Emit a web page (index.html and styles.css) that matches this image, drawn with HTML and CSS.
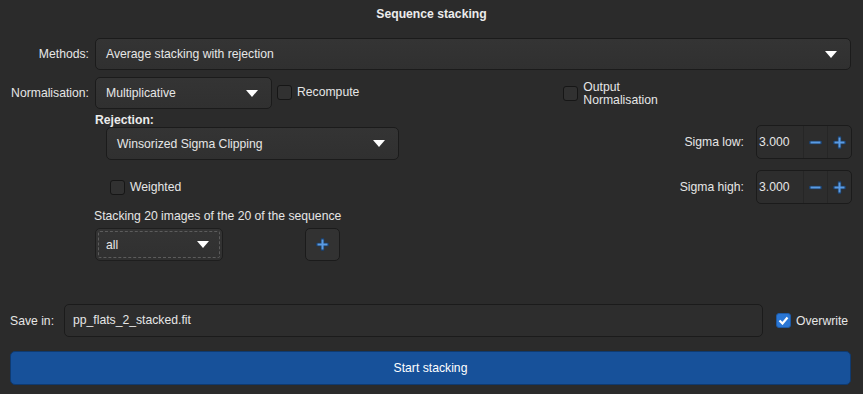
FILE: index.html
```html
<!DOCTYPE html>
<html lang="en">
  <head>
    <meta charset="UTF-8">
    <link rel="stylesheet" href="styles.css">
    <title>Sequence stacking</title>
  </head>
  <body>
    <div class="title">Sequence stacking</div>

    <div class="row methods-row">
      <label class="row-label">Methods:</label>
      <div class="combo grow">
        <span>Average stacking with rejection</span>
        <span class="arrow"></span>
      </div>
    </div>

    <div class="row norm-row">
      <label class="row-label">Normalisation:</label>
      <div class="combo norm-combo">
        <span>Multiplicative</span>
        <span class="arrow"></span>
      </div>
      <div class="check recompute"><span class="box"></span>Recompute</div>
      <div class="check output-norm"><span class="box"></span><span>Output<br>Normalisation</span></div>
    </div>

    <div class="rejection">
      <div class="rej-left">
        <div class="rej-title">Rejection:</div>
        <div class="combo rej-combo">
          <span>Winsorized Sigma Clipping</span>
          <span class="arrow"></span>
        </div>
        <div class="check weighted"><span class="box"></span>Weighted</div>
        <div class="stack-info">Stacking 20 images of the 20 of the sequence</div>
        <div class="filter-row">
          <div class="combo all-combo">
            <span>all</span>
            <span class="arrow"></span>
          </div>
          <div class="add-btn">
            <svg width="13" height="13" viewBox="0 0 13 13"><path d="M6.5 1.5v10M1.5 6.5h10" stroke="#1d3e66" stroke-width="3.6" stroke-linecap="round"/><path d="M6.5 1.5v10M1.5 6.5h10" stroke="#5a9be3" stroke-width="2"/></svg>
          </div>
        </div>
      </div>
      <div class="rej-right">
        <div class="sigma-row">
          <span class="sigma-label">Sigma low:</span>
          <div class="spin">
            <span class="spin-value">3.000</span>
            <span class="spin-btn">
              <svg width="13" height="13" viewBox="0 0 13 13"><path d="M1.5 6.5h10" stroke="#1d3e66" stroke-width="3.6" stroke-linecap="round"/><path d="M1.5 6.5h10" stroke="#5a9be3" stroke-width="2"/></svg>
            </span>
            <span class="spin-btn">
              <svg width="13" height="13" viewBox="0 0 13 13"><path d="M6.5 1.5v10M1.5 6.5h10" stroke="#1d3e66" stroke-width="3.6" stroke-linecap="round"/><path d="M6.5 1.5v10M1.5 6.5h10" stroke="#5a9be3" stroke-width="2"/></svg>
            </span>
          </div>
        </div>
        <div class="sigma-row">
          <span class="sigma-label">Sigma high:</span>
          <div class="spin">
            <span class="spin-value">3.000</span>
            <span class="spin-btn">
              <svg width="13" height="13" viewBox="0 0 13 13"><path d="M1.5 6.5h10" stroke="#1d3e66" stroke-width="3.6" stroke-linecap="round"/><path d="M1.5 6.5h10" stroke="#5a9be3" stroke-width="2"/></svg>
            </span>
            <span class="spin-btn">
              <svg width="13" height="13" viewBox="0 0 13 13"><path d="M6.5 1.5v10M1.5 6.5h10" stroke="#1d3e66" stroke-width="3.6" stroke-linecap="round"/><path d="M6.5 1.5v10M1.5 6.5h10" stroke="#5a9be3" stroke-width="2"/></svg>
            </span>
          </div>
        </div>
      </div>
    </div>

    <div class="row save-row">
      <label class="save-label">Save in:</label>
      <div class="entry">pp_flats_2_stacked.fit</div>
      <div class="check overwrite">
        <span class="box checked">
          <svg width="11" height="9" viewBox="0 0 11 9"><path d="M1.5 4.5l3 3 5-6" fill="none" stroke="#fff" stroke-width="2.2"/></svg>
        </span>Overwrite
      </div>
    </div>

    <div class="start-btn">Start stacking</div>
  </body>
</html>
```

FILE: styles.css
```css
body {
  margin: 0;
  width: 863px;
  height: 394px;
  background-color: #2b2b2b;
  color: #e6e6e6;
  font-family: "Liberation Sans", Arial, sans-serif;
  font-size: 12.2px;
  overflow: hidden;
}

.title {
  height: 28px;
  line-height: 28px;
  text-align: center;
  font-weight: bold;
  color: #ececec;
}

.row {
  display: flex;
  align-items: center;
  padding-right: 12px;
}

.methods-row {
  margin-top: 10px;
  height: 32px;
}

.norm-row {
  margin-top: 7px;
  height: 32px;
}

.row-label {
  width: 89px;
  text-align: right;
  margin-right: 6px;
}

.combo {
  box-sizing: border-box;
  height: 32px;
  display: flex;
  align-items: center;
  justify-content: space-between;
  padding: 0 13px 0 10px;
  background: linear-gradient(#343434, #303030);
  border: 1px solid #1b1b1b;
  border-radius: 5px;
}

.grow {
  flex: 1;
}

.arrow {
  width: 0;
  height: 0;
  border-left: 6px solid transparent;
  border-right: 6px solid transparent;
  border-top: 7px solid #ffffff;
}

.norm-combo {
  width: 177px;
}

.check {
  display: flex;
  align-items: center;
}

.box {
  box-sizing: border-box;
  width: 15px;
  height: 15px;
  margin-right: 5px;
  background: #313131;
  border: 1px solid #161616;
  border-radius: 3px;
  display: flex;
  align-items: center;
  justify-content: center;
}

.box.checked {
  background: #2a76d4;
  border-color: #1d5aa6;
}

.recompute {
  margin-left: 5px;
  margin-top: -2px;
}

.output-norm {
  margin-left: 204px;
  line-height: 13px;
  margin-top: 1px;
}

.rejection {
  display: flex;
  justify-content: space-between;
  padding-left: 95px;
  padding-right: 11px;
}

.rej-title {
  margin-top: 4px;
  height: 15px;
  font-weight: bold;
  color: #ececec;
}

.rej-combo {
  margin-top: -1px;
  margin-left: 11px;
  width: 293px;
  height: 33px;
}

.weighted {
  margin-left: 15px;
  margin-top: 19px;
  height: 16px;
}

.stack-info {
  margin-top: 14px;
  margin-left: -1px;
  height: 14px;
}

.filter-row {
  display: flex;
  align-items: center;
  margin-top: 5px;
}

.all-combo {
  width: 128px;
  height: 33px;
  border-color: #1e1e1e;
  outline: 1px dashed #5c5c5c;
  outline-offset: -4px;
}

.add-btn {
  box-sizing: border-box;
  width: 35px;
  height: 33px;
  margin-left: 82px;
  display: flex;
  align-items: center;
  justify-content: center;
  background: #323232;
  border: 1px solid #1b1b1b;
  border-radius: 5px;
}

.rej-right {
  padding-top: 16px;
}

.sigma-row {
  display: flex;
  align-items: center;
  justify-content: flex-end;
  margin-bottom: 11px;
}

.sigma-label {
  margin-right: 12px;
}

.spin {
  box-sizing: border-box;
  width: 96px;
  height: 34px;
  display: flex;
  align-items: stretch;
  background: #2d2d2d;
  border: 1px solid #1b1b1b;
  border-radius: 5px;
}

.spin-value {
  flex: 1;
  display: flex;
  align-items: center;
  padding-left: 2px;
}

.spin-btn {
  width: 23px;
  display: flex;
  align-items: center;
  justify-content: center;
  border-left: 1px solid #262626;
}

.save-row {
  margin-top: 43px;
  height: 33px;
}

.save-label {
  margin-left: 10px;
  width: 54px;
}

.entry {
  box-sizing: border-box;
  width: 699px;
  height: 33px;
  line-height: 31px;
  padding-left: 8px;
  background: #2d2d2d;
  border: 1px solid #1b1b1b;
  border-radius: 5px;
}

.overwrite {
  margin-left: 13px;
}

.start-btn {
  box-sizing: border-box;
  margin: 14px 12px 0 10px;
  height: 34px;
  line-height: 32px;
  text-align: center;
  color: #ffffff;
  background: #17519a;
  border: 1px solid #0f3a70;
  border-radius: 5px;
}
```
